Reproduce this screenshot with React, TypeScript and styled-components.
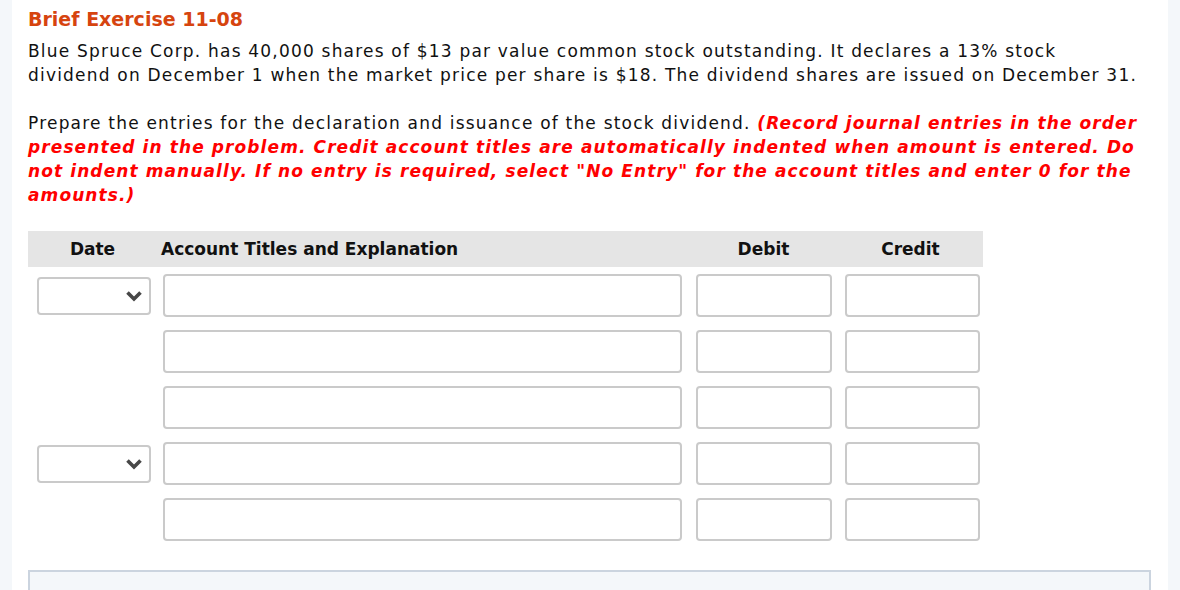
import React from "react";
import styled, { createGlobalStyle } from "styled-components";

const GlobalStyle = createGlobalStyle`
  html, body { margin: 0; padding: 0; background: #f4f7fa; }
  body { font-family: Verdana, "DejaVu Sans", sans-serif; }
`;

const Page = styled.div`
  padding: 0 12px;
  height: 590px;
  overflow: hidden;
  box-sizing: border-box;
`;

const Panel = styled.main`
  background: #ffffff;
  min-height: 590px;
  padding: 5px 17px 0 16px;
  box-sizing: border-box;
`;

const Title = styled.h2`
  margin: 0 0 6px 0;
  font-size: 19px;
  line-height: 28px;
  font-weight: bold;
  color: #d6440f;
`;

const Para = styled.p`
  margin: 0 0 24px 0;
  font-size: 17px;
  line-height: 24px;
  letter-spacing: 1.2px;
  color: #111;
  white-space: nowrap;
`;

const Note = styled.em`
  font-size: 17px;
  font-weight: bold;
  letter-spacing: 1.1px;
  color: #ff0000;
`;

const Table = styled.div`
  width: 955px;
  display: grid;
  grid-template-columns: 129px 532px 149px 145px;
  margin-top: 9px;
`;

const HeadCell = styled.div<{ $align?: "left" | "center" }>`
  background: #e5e5e5;
  height: 36px;
  line-height: 36px;
  font-size: 17px;
  font-weight: bold;
  color: #111;
  text-align: ${(p) => p.$align ?? "center"};
  padding-left: ${(p) => (p.$align === "left" ? "4px" : "0")};
  margin-bottom: 7px;
`;

const Cell = styled.div<{ $pad: number }>`
  height: 56px;
  display: flex;
  align-items: flex-start;
  padding-left: ${(p) => p.$pad}px;
`;

const TextBox = styled.input<{ $w: number }>`
  width: ${(p) => p.$w}px;
  height: 43px;
  box-sizing: border-box;
  border: 2px solid #cacaca;
  border-radius: 4px;
  background: #fff;
  padding: 0 6px;
  font-family: inherit;
  font-size: 15px;
  outline: none;
`;

const SelectBox = styled.div`
  margin-top: 3px;
  width: 114px;
  height: 38px;
  box-sizing: border-box;
  border: 2px solid #cacaca;
  border-radius: 4px;
  background: #fff;
  display: flex;
  align-items: center;
  justify-content: flex-end;
  padding-right: 6px;
`;

const Chevron = () => (
  <svg width="18" height="12" viewBox="0 0 18 12">
    <polyline
      points="2.5,2.5 9,9 15.5,2.5"
      fill="none"
      stroke="#474747"
      strokeWidth="3.6"
    />
  </svg>
);

const Bottom = styled.div`
  margin-top: 16px;
  width: 1123px;
  height: 40px;
  box-sizing: border-box;
  border: 2px solid #cbd4df;
  background: #f4f7fa;
`;

const rows = [true, false, false, true, false];

export default function App() {
  return (
    <>
      <GlobalStyle />
      <Page>
        <Panel>
          <Title>Brief Exercise 11-08</Title>
          <Para>
            Blue Spruce Corp. has 40,000 shares of $13 par value common stock outstanding. It declares a 13% stock
            <br />
            dividend on December 1 when the market price per share is $18. The dividend shares are issued on December 31.
          </Para>
          <Para>
            Prepare the entries for the declaration and issuance of the stock dividend.{" "}
            <Note>
              (Record journal entries in the order
              <br />
              presented in the problem. Credit account titles are automatically indented when amount is entered. Do
              <br />
              not indent manually. If no entry is required, select "No Entry" for the account titles and enter 0 for the
              <br />
              amounts.)
            </Note>
          </Para>
          <Table>
            <HeadCell>Date</HeadCell>
            <HeadCell $align="left">Account Titles and Explanation</HeadCell>
            <HeadCell>Debit</HeadCell>
            <HeadCell>Credit</HeadCell>
            {rows.map((hasDate, i) => (
              <React.Fragment key={i}>
                <Cell $pad={9}>
                  {hasDate && (
                    <SelectBox>
                      <Chevron />
                    </SelectBox>
                  )}
                </Cell>
                <Cell $pad={6}>
                  <TextBox $w={519} />
                </Cell>
                <Cell $pad={7}>
                  <TextBox $w={136} />
                </Cell>
                <Cell $pad={7}>
                  <TextBox $w={135} />
                </Cell>
              </React.Fragment>
            ))}
          </Table>
          <Bottom />
        </Panel>
      </Page>
    </>
  );
}
